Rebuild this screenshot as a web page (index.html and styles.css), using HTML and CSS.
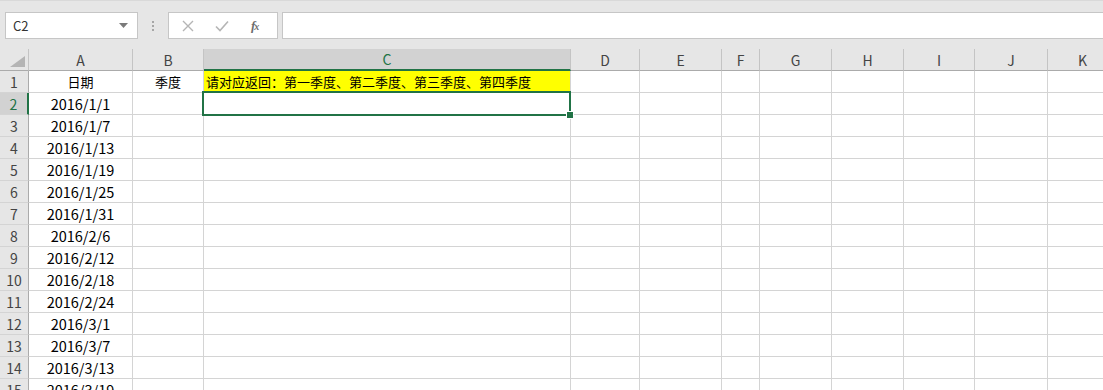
FILE: index.html
```html
<!DOCTYPE html>
<html lang="zh-CN">
<head>
    <meta charset="UTF-8">
    <title>Excel</title>
    <link rel="stylesheet" href="styles.css">
</head>
<body>
    <div class="toolbar">
        <div class="name-box">
            <span>C2</span>
            <svg class="caret" width="9" height="5" viewBox="0 0 9 5"><path d="M0 0h9L4.5 5z" fill="#7a7a7a"/></svg>
        </div>
        <div class="grip"><i></i><i></i><i></i></div>
        <div class="fx-buttons">
            <svg width="12" height="12" viewBox="0 0 12 12"><path d="M1 1l10 10M11 1L1 11" stroke="#b5b5b5" stroke-width="1.4" fill="none"/></svg>
            <svg width="14" height="12" viewBox="0 0 14 12"><path d="M1 6.5l4 4L13 1.5" stroke="#b5b5b5" stroke-width="1.6" fill="none"/></svg>
            <span class="fx">f<span>x</span></span>
        </div>
        <div class="formula"></div>
    </div>

    <div class="sheet">
        <div class="corner"><svg width="15" height="11" viewBox="0 0 15 11"><path d="M15 0v11H0z" fill="#b4b4b4"/></svg></div>
        <div class="col-head">A</div>
        <div class="col-head">B</div>
        <div class="col-head active">C</div>
        <div class="col-head">D</div>
        <div class="col-head">E</div>
        <div class="col-head">F</div>
        <div class="col-head">G</div>
        <div class="col-head">H</div>
        <div class="col-head">I</div>
        <div class="col-head">J</div>
        <div class="col-head">K</div>

        <div class="row-head">1</div>
        <div class="cell center">日期</div>
        <div class="cell center">季度</div>
        <div class="cell note">请对应返回：第一季度、第二季度、第三季度、第四季度</div>
        <div class="cell"></div><div class="cell"></div><div class="cell"></div><div class="cell"></div>
        <div class="cell"></div><div class="cell"></div><div class="cell"></div><div class="cell"></div>
    </div>

    <div class="selection"><span class="handle"></span></div>

    <script>
        const sheet = document.querySelector('.sheet');
        const dates = ['2016/1/1', '2016/1/7', '2016/1/13', '2016/1/19', '2016/1/25', '2016/1/31',
            '2016/2/6', '2016/2/12', '2016/2/18', '2016/2/24', '2016/3/1', '2016/3/7',
            '2016/3/13', '2016/3/19'];
        for (let i = 0; i < dates.length; i++) {
            const head = document.createElement('div');
            head.className = 'row-head' + (i === 0 ? ' active' : '');
            head.textContent = i + 2;
            sheet.appendChild(head);
            for (let c = 0; c < 11; c++) {
                const cell = document.createElement('div');
                cell.className = 'cell center';
                if (c === 0) {
                    cell.className += ' date';
                    cell.textContent = dates[i];
                }
                sheet.appendChild(cell);
            }
        }
    </script>
</body>
</html>
```

FILE: styles.css
```css
body {
    margin: 0;
    background: #e6e6e6;
    font-family: "Noto Sans CJK SC", "Liberation Sans", sans-serif;
    overflow: hidden;
    width: 1103px;
    height: 390px;
    position: relative;
}
.toolbar {
    display: flex;
    align-items: flex-start;
    height: 49px;
    padding-top: 11px;
    box-sizing: border-box;
    border-top: 1px solid #d9d9d9;
}
.name-box {
    margin-left: 5px;
    width: 133px;
    height: 27px;
    box-sizing: border-box;
    background: #fff;
    border: 1px solid #c6c6c6;
    display: flex;
    align-items: center;
    justify-content: space-between;
    padding: 0 9px 0 7px;
    font-size: 13px;
    color: #333;
}
.grip {
    margin-left: 14px;
    width: 3px;
    height: 27px;
    display: flex;
    flex-direction: column;
    justify-content: center;
    gap: 2px;
}
.grip i {
    width: 2px;
    height: 2px;
    background: #a6a6a6;
}
.fx-buttons {
    margin-left: 13px;
    width: 110px;
    height: 27px;
    box-sizing: border-box;
    background: #fff;
    border: 1px solid #c6c6c6;
    display: flex;
    align-items: center;
    padding-left: 13px;
    gap: 21px;
}
.fx {
    font-family: "Liberation Serif", serif;
    font-style: italic;
    font-weight: bold;
    font-size: 13px;
    color: #6d6d6d;
    margin-left: 1px;
}
.fx span {
    font-size: 10px;
    margin-left: -1px;
}
.formula {
    margin-left: 4px;
    flex: 1;
    height: 27px;
    box-sizing: border-box;
    background: #fff;
    border: 1px solid #c6c6c6;
    border-right: none;
}
.sheet {
    display: grid;
    grid-template-columns: 29px 104px 71px 367px 69px 82px 38px 72px 72px 71px 73px 70px;
    grid-auto-rows: 22px;
    background: #fff;
}
.sheet > div {
    box-sizing: border-box;
    display: flex;
    align-items: center;
    overflow: hidden;
    white-space: nowrap;
}
.corner {
    background: #e6e6e6;
    border-right: 1px solid #c4c4c4;
    border-bottom: 1px solid #ababab;
    justify-content: flex-end;
    align-items: flex-end !important;
    padding: 0 3px 3px 0;
}
.col-head {
    background: #e6e6e6;
    border-right: 1px solid #c4c4c4;
    border-bottom: 1px solid #ababab;
    justify-content: center;
    font-size: 14px;
    color: #444;
}
.col-head.active {
    background: #d2d2d2;
    color: #217346;
    border-bottom: 2px solid #217346;
}
.row-head {
    background: #e6e6e6;
    border-right: 1px solid #ababab;
    border-bottom: 1px solid #d4d4d4;
    justify-content: center;
    font-size: 14px;
    color: #444;
}
.row-head.active {
    background: #d2d2d2;
    color: #217346;
    border-right: 2px solid #217346;
}
.cell {
    border-right: 1px solid #d4d4d4;
    border-bottom: 1px solid #d4d4d4;
    font-size: 13px;
    color: #000;
}
.cell.date {
    font-size: 14.5px;
}
.center {
    justify-content: center;
}
.note {
    background: #ffff00;
    padding-left: 2px;
}
.selection {
    position: absolute;
    left: 202px;
    top: 91px;
    width: 369px;
    height: 25px;
    box-sizing: border-box;
    border: 2px solid #217346;
}
.handle {
    position: absolute;
    right: -5px;
    bottom: -5px;
    width: 6px;
    height: 6px;
    background: #217346;
    border: 1px solid #fff;
}
```
